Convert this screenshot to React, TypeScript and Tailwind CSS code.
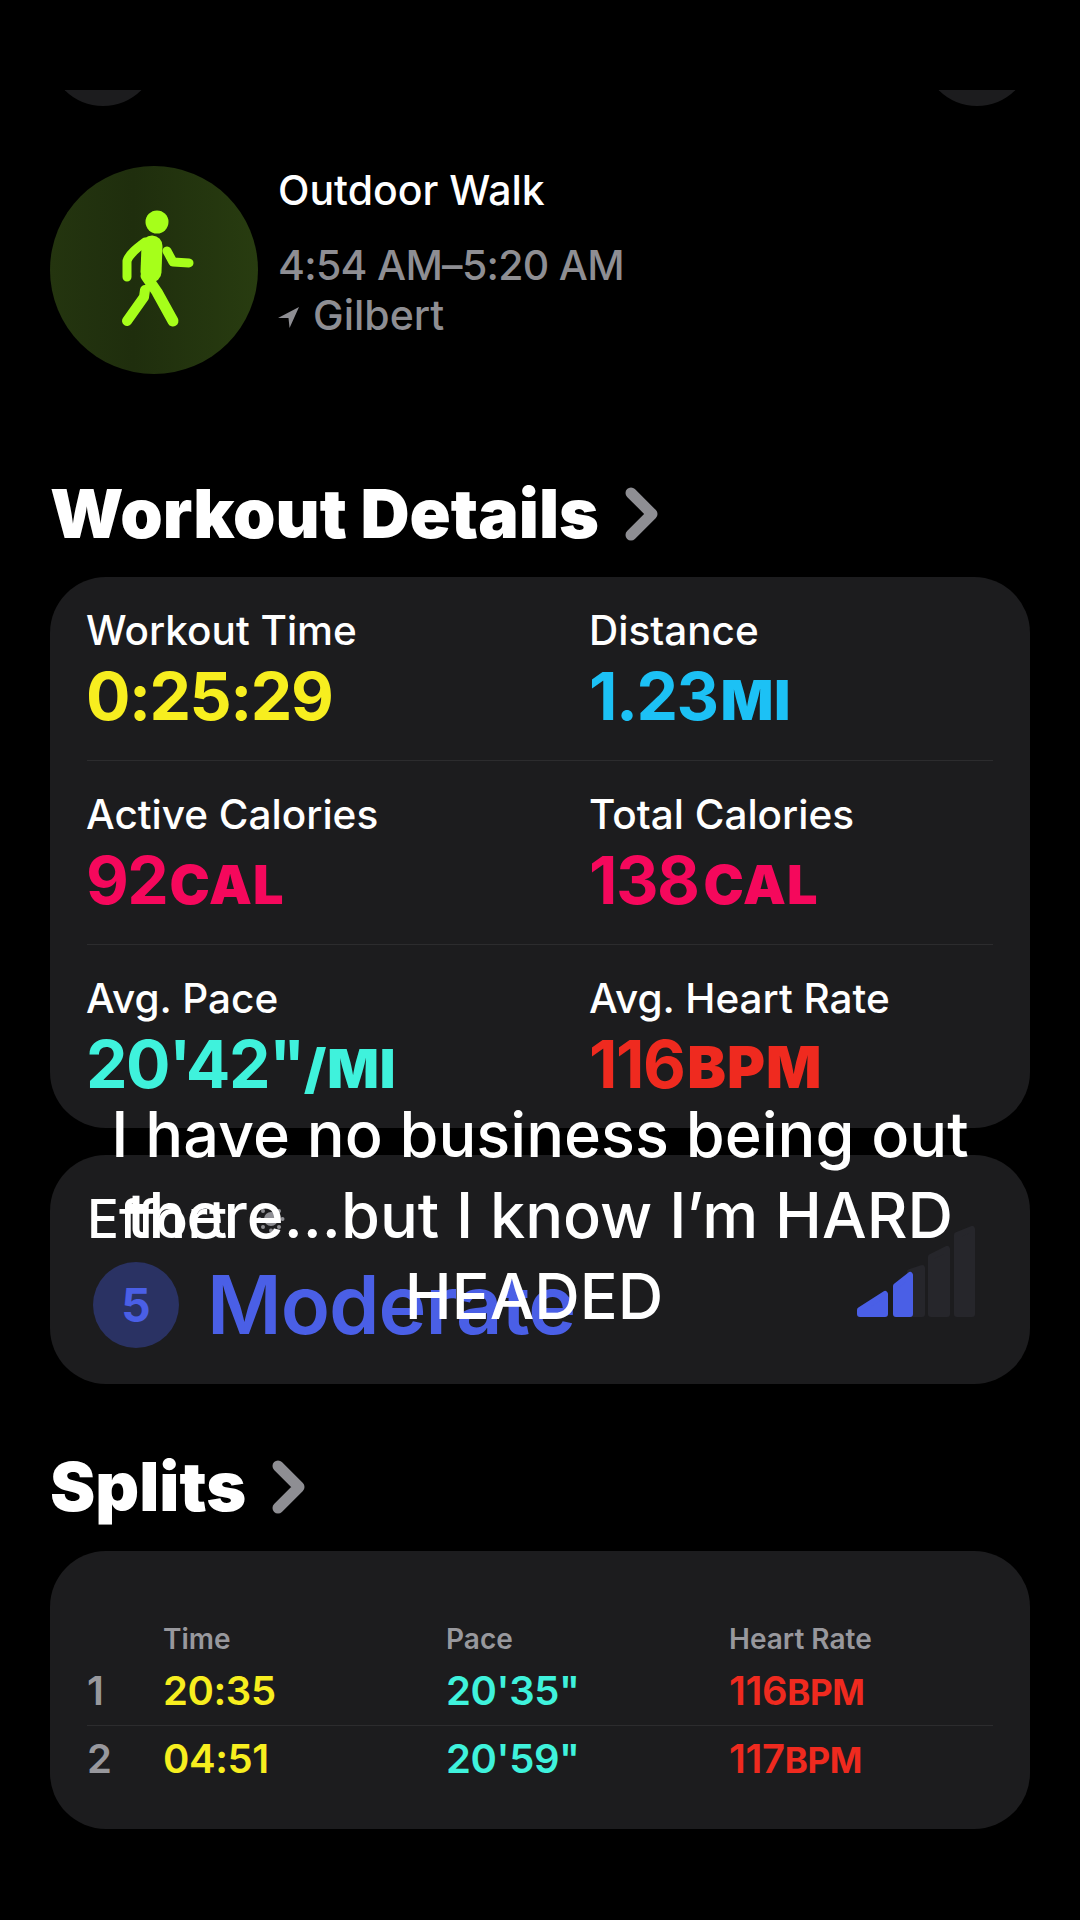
const metrics = [
  [
    { label: "Workout Time", value: "0:25:29", unit: "", unitClass: "", color: "text-[#f7ee1f]" },
    { label: "Distance", value: "1.23", unit: "MI", unitClass: "ml-[3px] text-[55px]", color: "text-[#1cc1f5]" },
  ],
  [
    { label: "Active Calories", value: "92", unit: "CAL", unitClass: "ml-[2px] text-[54px]", color: "text-[#f5085c]" },
    { label: "Total Calories", value: "138", unit: "CAL", unitClass: "ml-[5px] text-[54px]", color: "text-[#f5085c]" },
  ],
  [
    { label: "Avg. Pace", value: `20'42"`, unit: "/MI", unitClass: "text-[54px]", color: "text-[#3ff2dc]" },
    { label: "Avg. Heart Rate", value: "116", unit: "BPM", unitClass: "ml-[3px] text-[58px]", color: "text-[#ef2a1f]" },
  ],
];

const splits = [
  { n: "1", time: "20:35", pace: `20'35"`, hr: "116", rowClass: "h-[70px] border-b border-[#2c2c2e]" },
  { n: "2", time: "04:51", pace: `20'59"`, hr: "117", rowClass: "h-[66px]" },
];

function Walker() {
  return (
    <svg viewBox="0 0 208 208" className="w-[208px] h-[208px]">
      <circle cx="107" cy="56" r="11.5" fill="#a6ff1a" />
      <g fill="none" stroke="#a6ff1a" strokeLinecap="round" strokeLinejoin="round">
        <path d="M102 80 L101 106" strokeWidth="21" />
        <path d="M95 76 C87 82 79 88 77 95 L77 111" strokeWidth="9" />
        <path d="M117 85 L123 96 L139 97" strokeWidth="9" />
        <path d="M96 110 L107 126 L123 155" strokeWidth="11" />
        <path d="M95 124 L94 131 L77 155" strokeWidth="10" />
      </g>
    </svg>
  );
}

function SectionTitle({ title }: { title: string }) {
  return (
    <div className="flex items-center gap-[26px] px-[50px]">
      <h2 className="text-[68px] leading-[76px] font-black text-white">{title}</h2>
      <svg viewBox="0 0 34 54" className="w-[34px] h-[54px] mt-[2px]">
        <path
          d="M6 6 L27 27 L6 48"
          fill="none"
          stroke="#8e8e93"
          strokeWidth="11"
          strokeLinecap="round"
          strokeLinejoin="round"
        />
      </svg>
    </div>
  );
}

export default function App() {
  return (
    <div
      className="relative w-[1080px] h-[1920px] overflow-hidden bg-black text-white"
      style={{ fontFamily: "Inter, 'Liberation Sans', sans-serif" }}
    >
      {/* Clipped buttons of the nav bar */}
      <div className="h-[90px]" />
      <div className="h-[16px] overflow-hidden flex justify-between px-[49px]">
        <div className="w-[108px] h-[108px] rounded-full bg-[#1c1c1e] -mt-[92px]" />
        <div className="w-[108px] h-[108px] rounded-full bg-[#1c1c1e] -mt-[92px]" />
      </div>

      {/* Workout header */}
      <div className="mt-[60px] flex gap-[20px] px-[50px]">
        <div className="w-[208px] h-[208px] rounded-full bg-[linear-gradient(90deg,#24350f,#1f2e0d_40%,#283c10)]">
          <Walker />
        </div>
        <div className="pt-[1px]">
          <div className="text-[41px] leading-[46px] font-medium">Outdoor Walk</div>
          <div className="mt-[27px] text-[41px] leading-[50px] font-medium text-[#8e8e93] tracking-[-0.7px]">
            4:54 AM–5:20 AM
          </div>
          <div className="text-[41px] leading-[50px] font-medium text-[#8e8e93] flex items-center gap-[14px]">
            <svg viewBox="0 0 20 20" className="w-[21px] h-[21px] mt-[4px]">
              <path d="M0 10.5 L20 0 L11 20 L10 10.5 Z" fill="#8e8e93" />
            </svg>
            Gilbert
          </div>
        </div>
      </div>

      <div className="mt-[101px]">
        <SectionTitle title="Workout Details" />
      </div>

      <div className="mx-[50px] mt-[26px] h-[551px] rounded-[56px] bg-[#1c1c1e] px-[37px]">
        {metrics.map((row, i) => (
          <div
            key={i}
            className={`grid grid-cols-[503px_1fr] h-[184px] pt-[29px] ${i < 2 ? "border-b border-[#2c2c2e]" : ""}`}
          >
            {row.map((m) => (
              <div key={m.label}>
                <div className="text-[40.5px] leading-[50px] font-medium -ml-[1px]">{m.label}</div>
                <div className={`text-[66px] leading-[80px] font-bold tracking-[-1.5px] -ml-[1px] ${m.color}`}>
                  {m.value}
                  <span className={`font-black tracking-[1px] ${m.unitClass}`}>{m.unit}</span>
                </div>
              </div>
            ))}
          </div>
        ))}
      </div>

      {/* Effort */}
      <div className="mx-[50px] mt-[27px] h-[229px] rounded-[56px] bg-[#1c1c1e] px-[37px] pt-[34px]">
        <div className="text-[53px] leading-[60px] font-medium flex items-center gap-[30px]">
          Effort
          <svg viewBox="0 0 28 28" className="w-[28px] h-[28px]" fill="#8e8e93">
            <circle cx="14" cy="14" r="7" />
            <circle cx="14" cy="2.5" r="2" />
            <circle cx="14" cy="25.5" r="2" />
            <circle cx="2.5" cy="14" r="2" />
            <circle cx="25.5" cy="14" r="2" />
            <circle cx="6" cy="6" r="2" />
            <circle cx="22" cy="6" r="2" />
            <circle cx="6" cy="22" r="2" />
            <circle cx="22" cy="22" r="2" />
          </svg>
        </div>
        <div className="mt-[13px] flex items-center">
          <div className="w-[86px] h-[86px] ml-[6px] rounded-full bg-[#2a3263] flex items-center justify-center text-[46px] font-bold text-[#4a5fe6]">
            5
          </div>
          <div className="ml-[28px] text-[81px] leading-[86px] font-semibold tracking-[-1px] text-[#4a5fe6]">
            Moderate
          </div>
          <svg viewBox="0 0 118 92" className="ml-auto mr-[18px] -mt-[66px] w-[118px] h-[92px]">
            <g strokeWidth="6" strokeLinejoin="round">
              <path d="M53 46 L65 42 L65 88 L53 88 Z" fill="#26262b" stroke="#26262b" />
              <path d="M74 31 L90 23 L90 88 L74 88 Z" fill="#26262b" stroke="#26262b" />
              <path d="M100 9 L115 3 L115 88 L100 88 Z" fill="#26262b" stroke="#26262b" />
              <path d="M3 84 L28 68 L28 88 L3 88 Z" fill="#4a5fe6" stroke="#4a5fe6" />
              <path d="M39 60 L53 49 L53 88 L39 88 Z" fill="#4a5fe6" stroke="#4a5fe6" />
            </g>
          </svg>
        </div>
      </div>

      <div className="mt-[64px]">
        <SectionTitle title="Splits" />
      </div>

      <div className="mx-[50px] mt-[27px] h-[278px] rounded-[56px] bg-[#1c1c1e] px-[37px] pt-[72px]">
        <div className="grid grid-cols-[76px_283px_283px_1fr] text-[28px] leading-[33px] font-semibold text-[#98989d]">
          <div />
          <div>Time</div>
          <div>Pace</div>
          <div>Heart Rate</div>
        </div>
        {splits.map((s) => (
          <div
            key={s.n}
            className={`grid grid-cols-[76px_283px_283px_1fr] items-center text-[40px] font-semibold tracking-[-0.4px] ${s.rowClass}`}
          >
            <div className="text-[#98989d]">{s.n}</div>
            <div className="text-[#f7ee1f]">{s.time}</div>
            <div className="text-[#3ff2dc]">{s.pace}</div>
            <div className="text-[#ef2a1f]">
              {s.hr}
              <span className="text-[35px] font-bold">BPM</span>
            </div>
          </div>
        ))}
      </div>

      {/* Caption burned over the video */}
      <div className="absolute left-[100px] w-[880px] top-[1094px] text-center text-[63px] leading-[81px] font-medium text-white">
        I have no business being out there...but I know I’m HARD <span className="inline-block mr-[12px]">HEADED</span>
      </div>
    </div>
  );
}
